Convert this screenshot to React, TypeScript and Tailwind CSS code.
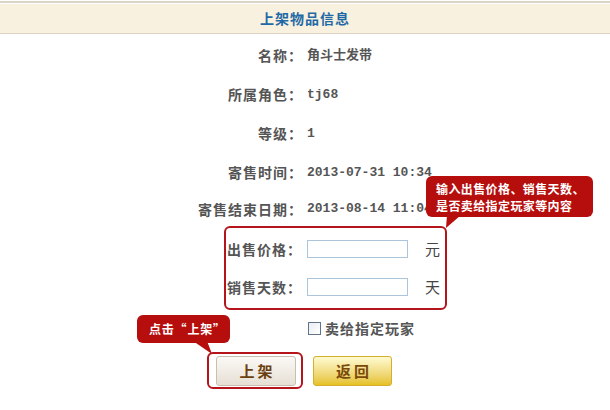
const cjk = { fontFamily: '"Noto Sans CJK SC", "Noto Sans", sans-serif' };
const mono = { fontFamily: '"Liberation Mono", "Noto Sans CJK SC", monospace' };

function InfoRow({ label, value, h = "h-[39px]" }: { label: string; value: string; h?: string }) {
  return (
    <div className={`flex items-center ${h}`}>
      <div className="w-[303px] text-right text-[14px] font-bold tracking-[1px] text-[#555]">{label}</div>
      <div className="ml-[4px] whitespace-nowrap text-[13px] font-bold text-[#555]" style={mono}>
        {value}
      </div>
    </div>
  );
}

function InputRow({ label, unit }: { label: string; unit: string }) {
  return (
    <div className="flex h-[38px] items-center pl-[1px]">
      <div className="text-[14px] font-bold tracking-[1px] text-[#555]">{label}</div>
      <input className="ml-[5px] h-[18px] w-[101px] border border-[#aac5dc] bg-white outline-none" />
      <div className="ml-[17px] text-[15px] text-[#444]">{unit}</div>
    </div>
  );
}

export default function App() {
  return (
    <div className="relative h-[410px] w-[610px] overflow-hidden bg-white" style={cjk}>
      <div className="pt-[1px]">
        <div className="border-t-2 border-[#ddd4c9] pt-[1px]">
          <div className="flex h-[30px] items-center justify-center border-b border-[#dcd2c5] bg-[#f9f1df] text-[14px] font-bold tracking-[1px] text-[#1f6aa6]">
            上架物品信息
          </div>
        </div>
      </div>

      <div className="mt-[2px]">
        <InfoRow label="名称：" value="角斗士发带" />
        <InfoRow label="所属角色：" value="tj68" />
        <InfoRow label="等级：" value="1" />
        <InfoRow label="寄售时间：" value="2013-07-31 10:34" />
        <InfoRow label="寄售结束日期：" value="2013-08-14 11:04" h="h-[34px]" />
      </div>

      <div className="ml-[224px] h-[84px] w-[223px] rounded-[6px] border-2 border-[#b5141b] pt-[2px]">
        <InputRow label="出售价格：" unit="元" />
        <InputRow label="销售天数：" unit="天" />
      </div>

      <div className="flex h-[36px] items-center pl-[308px]">
        <span className="h-[13px] w-[13px] border border-[#5f7389] bg-gradient-to-br from-[#e9edf1] to-[#ffffff]" />
        <span className="ml-[4px] text-[14px] font-bold tracking-[1px] text-[#555]">卖给指定玩家</span>
      </div>

      <div className="mt-[10px] flex gap-[17px] pl-[216px]">
        <button className="h-[30px] w-[80px] rounded-[3px] border border-[#c9bfb1] bg-gradient-to-b from-[#fbf9f6] to-[#e6dfd4] pl-[3px] text-[15px] font-bold tracking-[3px] text-[#6b3f10]">
          上架
        </button>
        <button className="h-[30px] w-[79px] rounded-[3px] border border-[#d4ae2c] bg-gradient-to-b from-[#fffbd0] to-[#e6c11c] pl-[3px] text-[15px] font-bold tracking-[3px] text-[#7a4a0a]">
          返回
        </button>
      </div>

      {/* annotation: input hint */}
      <div className="absolute left-[426px] top-[176px] h-[41px] w-[167px] rounded-[6px] bg-[#b60d0d] pl-[10px] pt-[4px] text-[12px] font-bold leading-[17px] tracking-[0.4px] text-white">
        <div>输入出售价格、销售天数、</div>
        <div>是否卖给指定玩家等内容</div>
      </div>
      <svg className="absolute left-0 top-0" width="610" height="410">
        <polygon points="447,215 461,215 446,228" fill="#b60d0d" />
        <polygon points="193,341 207,341 212,354" fill="#b60d0d" />
      </svg>

      {/* annotation: click button */}
      <div className="absolute left-[137px] top-[315px] flex h-[28px] w-[93px] items-center rounded-[6px] bg-[#b60d0d] pl-[12px] text-[12px] font-bold tracking-[0.8px] text-white">
        点击“上架”
      </div>
      <div className="absolute left-[207px] top-[352px] h-[37px] w-[96px] rounded-[6px] border-2 border-[#b5141b]" />
    </div>
  );
}
